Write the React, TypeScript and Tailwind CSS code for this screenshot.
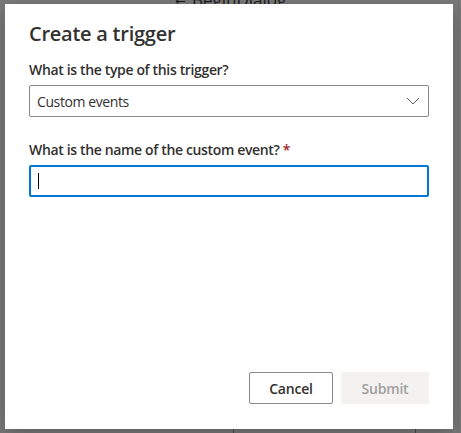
import React from "react";

export default function App() {
  return (
    <div
      className="relative w-[461px] h-[433px] overflow-hidden bg-[#7a7a7a]"
      style={{ fontFamily: '"Open Sans", "Noto Sans", sans-serif' }}
    >
      {/* background content peeking */}
      <div className="absolute left-[175px] top-[-13px] flex items-center gap-[6px] text-[#1b1b1b] text-[17px]">
        <span className="text-[13px]">⇄</span>
        <span>BeginDialog</span>
      </div>
      <div className="absolute left-[233px] top-[429px] w-[1px] h-[4px] bg-[#4a4a4a]" />
      <div className="absolute left-[415px] top-[429px] w-[1px] h-[4px] bg-[#4a4a4a]" />
      <div className="absolute left-[458px] top-0 w-[1px] h-[433px] bg-[#707070]" />

      {/* dialog */}
      <div className="absolute left-[5px] top-[4px] w-[448px] h-[425px] bg-white shadow-[0_6px_20px_rgba(0,0,0,0.25)] flex flex-col px-[24px] pt-[16px] pb-[25px]">
        <h1 className="text-[20px] leading-[28px] font-semibold tracking-[-0.25px] text-[#323130]">Create a trigger</h1>

        <div className="mt-[7px] py-[5px] text-[14px] leading-[20px] font-semibold tracking-[-0.35px] text-[#323130]">
          What is the type of this trigger?
        </div>
        <div className="h-[32px] border border-[#8a8886] rounded-[2px] flex items-center justify-between pl-[7px] pr-[8px]">
          <span className="text-[14px] tracking-[-0.4px] text-[#323130]">Custom events</span>
          <svg width="14" height="8" viewBox="0 0 14 8" fill="none">
            <path d="M1 1 L7 7 L13 1" stroke="#605e5c" strokeWidth="1" />
          </svg>
        </div>

        <div className="mt-[18px] py-[5px] text-[14px] leading-[20px] font-semibold tracking-[-0.35px] text-[#323130]">
          What is the name of the custom event? <span className="text-[#a4262c]">*</span>
        </div>
        <div className="h-[32px] border-2 border-[#0078d4] rounded-[2px] flex items-center pl-[7px]">
          <div className="w-[1px] h-[16px] bg-black" />
        </div>

        <div className="flex-1" />

        <div className="flex justify-end gap-[8px]">
          <button className="h-[32px] w-[84px] border border-[#8a8886] rounded-[2px] bg-white text-[14px] font-semibold tracking-[-0.2px] text-[#323130]">
            Cancel
          </button>
          <button className="h-[32px] w-[88px] rounded-[2px] bg-[#f3f2f1] text-[14px] font-semibold tracking-[-0.2px] text-[#a19f9d]">
            Submit
          </button>
        </div>
      </div>
    </div>
  );
}
